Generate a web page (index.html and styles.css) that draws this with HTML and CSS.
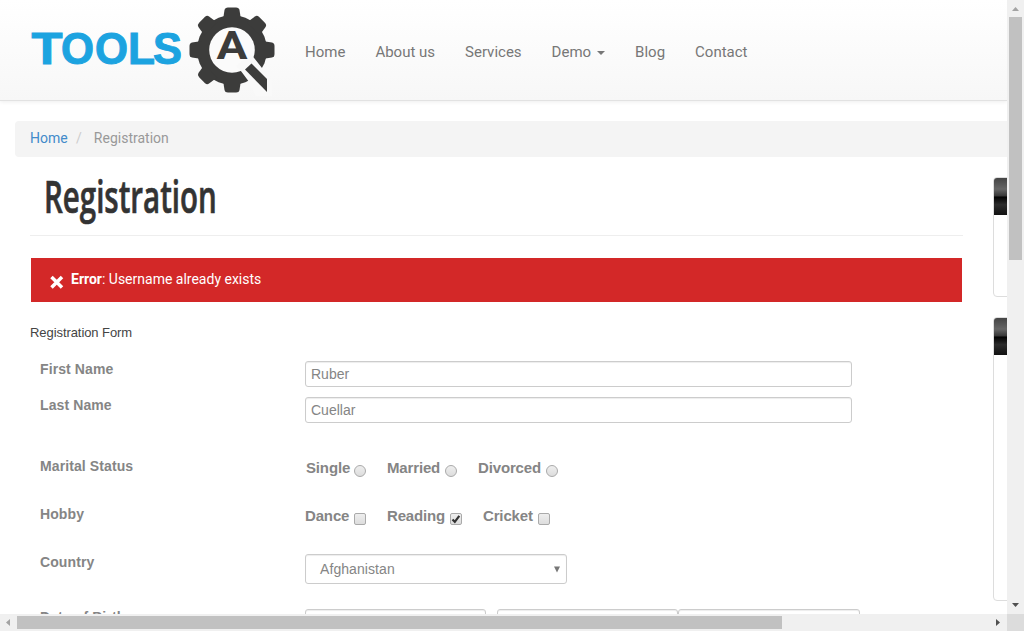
FILE: index.html
```html
<!DOCTYPE html>
<html lang="en">
<head>
<meta charset="utf-8">
<title>Registration</title>
<link rel="stylesheet" href="styles.css">
</head>
<body>
<div class="window">
  <div class="page">
    <header class="navbar">
      <svg class="logo" width="260" height="100" viewBox="20 0 260 100">
        <g class="wordmark" transform="translate(0 64)">
          <text x="31.500" y="0" textLength="31" lengthAdjust="spacingAndGlyphs">T</text>
          <text x="61" y="0" textLength="33" lengthAdjust="spacingAndGlyphs">O</text>
          <text x="95" y="0" textLength="33" lengthAdjust="spacingAndGlyphs">O</text>
          <text x="128" y="0" textLength="27" lengthAdjust="spacingAndGlyphs">L</text>
          <text x="153" y="0" textLength="29" lengthAdjust="spacingAndGlyphs">S</text>
        </g>
        <g fill="#3c3c3b">
          <circle cx="232" cy="50" r="35"/>
          <path id="tooth" d="M223 20 L224.500 10 Q225 7.500 228 7.500 H236 Q239 7.500 239.500 10 L241 20Z"/>
          <use href="#tooth" transform="rotate(45 232 50)"/>
          <use href="#tooth" transform="rotate(-45 232 50)"/>
          <use href="#tooth" transform="rotate(90 232 50)"/>
          <use href="#tooth" transform="rotate(-90 232 50)"/>
          <use href="#tooth" transform="rotate(180 232 50)"/>
          <use href="#tooth" transform="rotate(-135 232 50)"/>
          <circle cx="232" cy="50" r="22.800" fill="#fbfbfb"/>
          <path d="M241.500 71.700 L236 66 L250 54 L254.300 58.300 L262 68 L272 80 V96 H256 L248 80.500Z" fill="#f9f9f9"/>
          <path d="M245 69.500 L251.500 63.500 L267 79 V92Z"/>
          <text class="monogram" x="216.500" y="59.200" textLength="31" lengthAdjust="spacingAndGlyphs">A</text>
        </g>
      </svg>
      <nav class="menu">
        <a>Home</a><a>About us</a><a>Services</a><a>Demo <i class="caret"></i></a><a>Blog</a><a>Contact</a>
      </nav>
    </header>
    <div class="breadcrumb"><a>Home</a><span class="sep">/</span><span>Registration</span></div>
    <div class="columns">
      <main class="content">
        <h1><span>Registration</span></h1>
        <div class="alert">
          <svg width="14" height="14" viewBox="0 0 14 14"><path d="M1.500 2 12 12.500M12 2 1.500 12.500" stroke="#fff" stroke-width="3.500"/></svg>
          <p><b>Error</b>: Username already exists</p>
        </div>
        <p class="form-title">Registration Form</p>
        <form class="form">
          <div class="row"><label>First Name</label><div class="input">Ruber</div></div>
          <div class="row last-name"><label>Last Name</label><div class="input">Cuellar</div></div>
          <div class="row choices"><label>Marital Status</label>
            <div class="options">
              <span class="single">Single<i class="radio"></i></span>
              <span class="second">Married<i class="radio"></i></span>
              <span class="divorced">Divorced<i class="radio"></i></span>
            </div>
          </div>
          <div class="row choices"><label>Hobby</label>
            <div class="options">
              <span class="first">Dance<i class="check"></i></span>
              <span class="reading">Reading<i class="check"><svg width="10" height="10" viewBox="0 0 10 10"><path d="M1.500 5.500 3.800 7.800 8.300 1.800" fill="none" stroke="#333" stroke-width="2.200"/></svg></i></span>
              <span>Cricket<i class="check"></i></span>
            </div>
          </div>
          <div class="row country"><label>Country</label><div class="select"><span>Afghanistan</span><svg width="6" height="7" viewBox="0 0 6 7"><path d="M0 .500h6L3 6.500z" fill="#777"/></svg></div></div>
          <div class="row birth"><label>Date of Birth</label><div class="dates"><i class="month"></i><i></i><i class="year"></i></div></div>
        </form>
      </main>
      <aside class="sidebar">
        <div class="widget"><div class="widget-head"></div></div>
        <div class="widget tall"><div class="widget-head"></div></div>
      </aside>
    </div>
  </div>
  <div class="vscroll">
    <svg width="17" height="17"><path d="M5 11h7L8.500 7z" fill="#a3a3a3"/></svg>
    <div class="vthumb"></div>
    <svg class="down" width="17" height="17"><path d="M5 6h7L8.500 10z" fill="#505050"/></svg>
  </div>
  <div class="hscroll">
    <svg width="17" height="17"><path d="M10 5v7L6 8.500z" fill="#a3a3a3"/></svg>
    <div class="hthumb"></div>
    <svg class="right" width="17" height="17"><path d="M6 5v7L10 8.500z" fill="#505050"/></svg>
  </div>
  <div class="corner"></div>
</div>
</body>
</html>
```
FILE: styles.css
```css
* { box-sizing: border-box; }
body { margin: 0; background: #fff; font-family: Roboto, sans-serif; font-size: 14px; overflow: hidden; }
p, h1 { margin: 0; }
svg { display: block; flex: none; }
.window { display: grid; grid-template: 614px 17px / 1007px 17px; width: 1024px; height: 631px; }
.page { overflow: hidden; }
.navbar { display: flex; height: 101px; padding-left: 20px; background: linear-gradient(#fff, #f7f7f7); border-bottom: 1px solid #e2e2e2; box-shadow: 0 1px 4px rgba(0,0,0,.07); }
.wordmark { font: bold 43.5px "Liberation Sans", sans-serif; fill: #1ca3e0; stroke: #1ca3e0; stroke-width: 1px; }
.monogram { font: bold 38px Roboto, sans-serif; }
.menu { display: flex; gap: 30px; padding: 42px 0 0 25px; font-size: 15px; line-height: 20px; letter-spacing: 0; color: #777; white-space: nowrap; }
.menu a { display: flex; align-items: center; height: 20px; }
.caret { margin: 2px 0 0 6px; border: 4px solid transparent; border-top-color: #777; border-bottom: 0; }
.breadcrumb { display: flex; margin: 20px 0 0 15px; height: 36px; padding-left: 15px; background: #f4f4f4; border-radius: 4px 0 0 4px; line-height: 35px; font-size: 14px; color: #999; }
.breadcrumb a { color: #428bca; }
.sep { margin: 0 12px 0 8.4px; color: #ccc; }
.columns { display: flex; padding-left: 30px; gap: 30px; width: 1100px; }
.content { width: 933px; flex: none; }
h1 { height: 79px; border-bottom: 1px solid #eee; padding-left: 14px; font: 600 45px/77px "Open Sans", sans-serif; color: #333; }
h1 span { display: inline-block; transform: scaleX(.655); transform-origin: 0 50%; -webkit-text-stroke: .7px #333; }
.alert { display: flex; margin: 22px 1px 0; height: 44px; padding: 0 20px 0 19px; background: #d32828; color: #fff; font-size: 14px; line-height: 43px; }
.alert svg { margin: 17px 7px 0 0; }
.form-title { margin-top: 21px; font: 13px/20px "Liberation Sans", sans-serif; color: #444; letter-spacing: -.07px; }
.form { padding: 18px 0 0 10px; font-family: "Liberation Sans", sans-serif; color: #858585; }
.row { display: flex; height: 36px; }
.row label { width: 265px; font-weight: bold; font-size: 14px; line-height: 16px; letter-spacing: .1px; }
.input { width: 547px; height: 26px; padding-left: 5px; border: 1px solid #ccc; border-radius: 3px; box-shadow: inset 0 1px 1px rgba(0,0,0,.075); line-height: 24px; }
.last-name { height: 61px; }
.choices { height: 48px; }
.options { display: flex; font-weight: bold; font-size: 15px; line-height: 20px; letter-spacing: -.15px; }
.options span { display: flex; align-items: flex-start; }
.single { margin-left: 1px; width: 81px; }
.single .radio { margin-left: 4px; }
.second { width: 91px; }
.first { width: 82px; }
.reading { width: 96px; }
.radio, .check { width: 12px; height: 12px; margin: 7px 0 0 5px; border: 1px solid #aaa; background: linear-gradient(#eee, #ddd); flex: none; }
.radio { border-radius: 50%; }
.check { border-radius: 2px; }
.country { height: 55px; }
.select { display: flex; justify-content: space-between; width: 262px; height: 30px; padding: 0 6px 0 14px; border: 1px solid #ccc; border-radius: 3px; line-height: 28px; box-shadow: inset 0 1px 1px rgba(0,0,0,.075); letter-spacing: .08px; }
.select svg { margin-top: 11px; }
.dates { display: flex; }
.dates i { width: 181px; height: 30px; border: 1px solid #ccc; border-radius: 3px; box-shadow: inset 0 1px 1px rgba(0,0,0,.075); }
.dates .month { margin-right: 11px; }
.dates .year { width: 182px; }
.sidebar { width: 240px; padding-top: 20px; }
.widget { height: 120px; margin-bottom: 20px; border: 1px solid #ddd; border-radius: 4px; overflow: hidden; }
.tall { height: 284px; }
.widget-head { height: 37px; background: linear-gradient(#444, #666 30%, #353535 49%, #000 51%, #2c2c2c 72%, #111); }
.vscroll { background: #f0f0f0; display: flex; flex-direction: column; align-items: center; }
.vthumb { width: 13px; height: 243px; background: #c1c1c1; }
.down { margin-top: auto; }
.hscroll { background: #f0f0f0; display: flex; align-items: center; }
.hthumb { width: 765px; height: 13px; background: #c1c1c1; }
.right { margin-left: auto; }
.corner { background: #dcdcdc; }
```
